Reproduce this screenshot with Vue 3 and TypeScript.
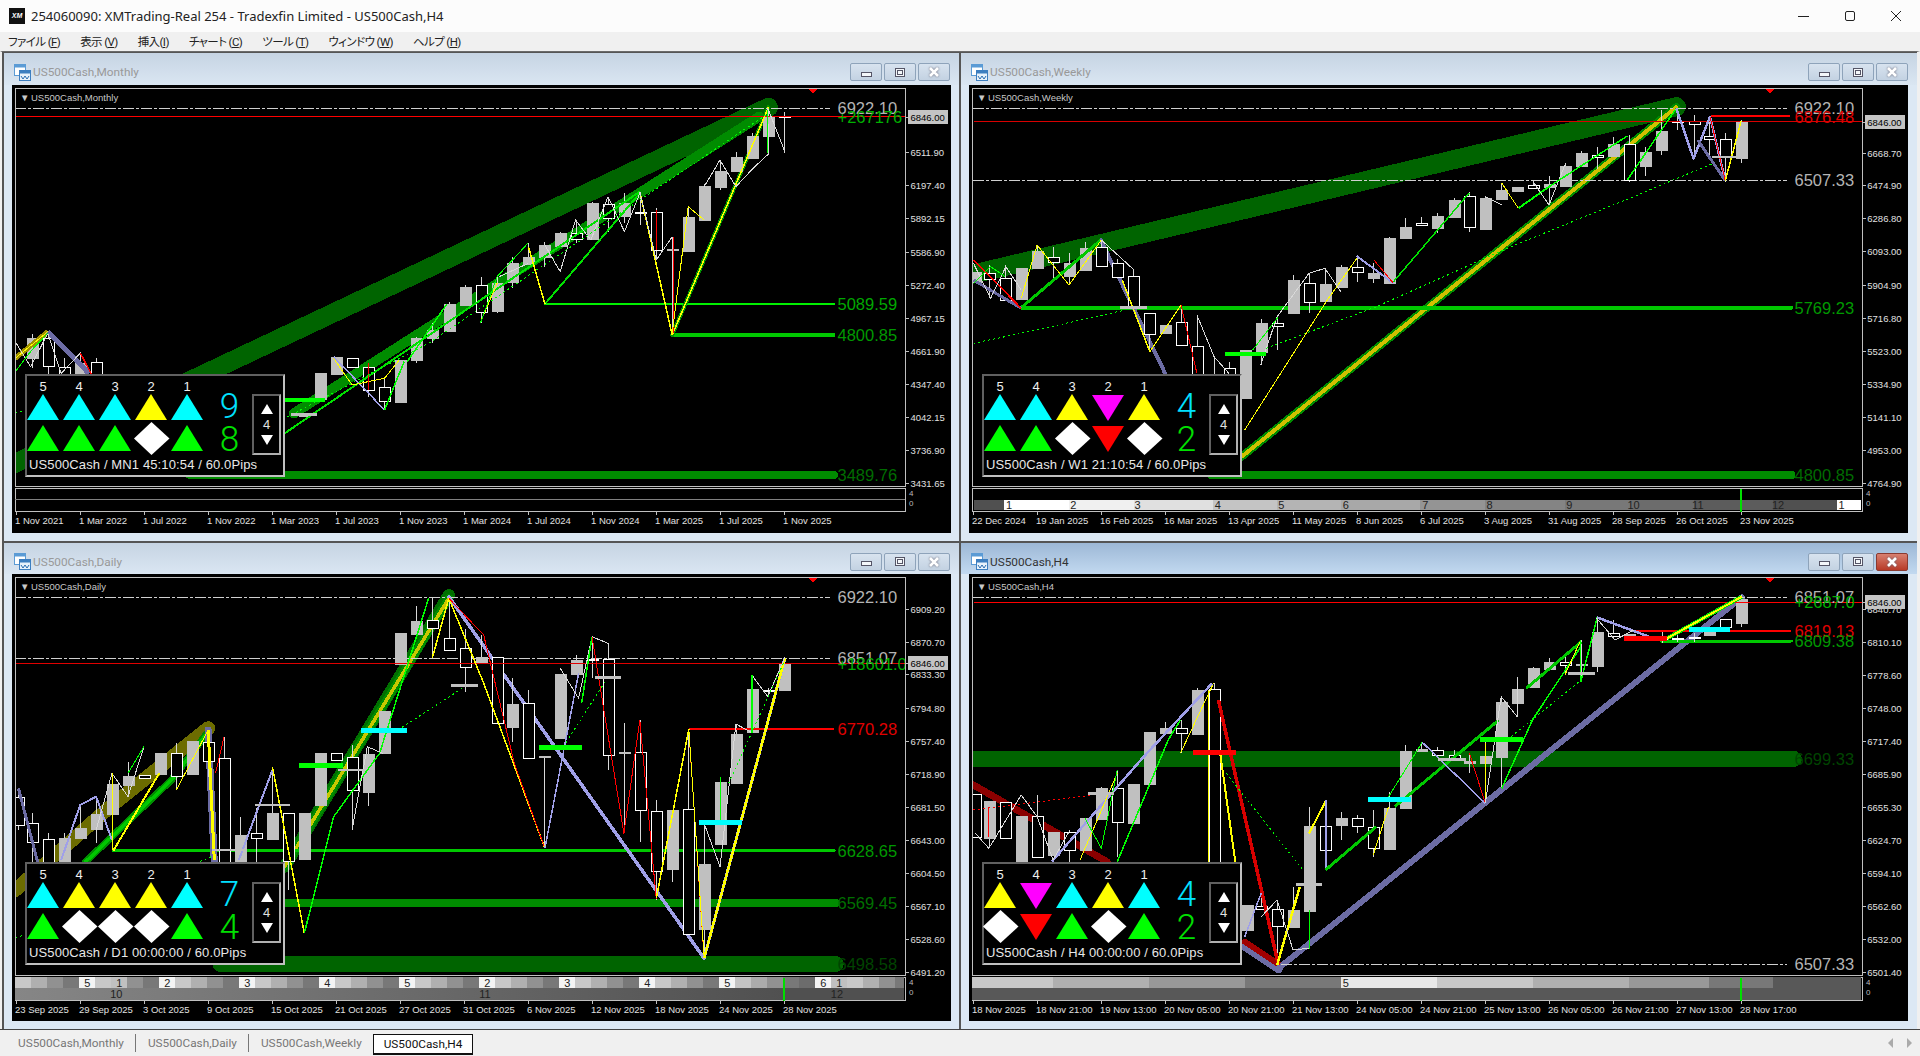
<template>
  <div class="app">
    <header class="titlebar">
      <span class="titlebar__logo">XM</span>
      <span class="titlebar__text">254060090: XMTrading-Real 254 - Tradexfin Limited - US500Cash,H4</span>
      <div class="titlebar__controls">
        <svg width="16" height="16" viewBox="0 0 16 16"><path d="M2 8.5h11" stroke="#222" fill="none" /></svg>
        <svg width="16" height="16" viewBox="0 0 16 16"><rect x="3.5" y="3.5" width="9" height="9" rx="1.5" stroke="#222" fill="none" /></svg>
        <svg width="16" height="16" viewBox="0 0 16 16"><path d="M3 3l10 10M13 3L3 13" stroke="#222" fill="none" /></svg>
      </div>
    </header>

    <nav class="menubar">
      <span v-for="m in menus" :key="m.label">{{ m.label }}{{ m.gap }}(<u>{{ m.key }}</u>)</span>
    </nav>

    <main class="mdi">
      <section
        v-for="(c, i) in charts"
        :key="c.title"
        class="child"
        :class="{ 'child--active': c.active, 'child--lower': i > 1 }"
      >
        <div class="child__title">
          <svg class="child__icon" width="17" height="17" viewBox="0 0 17 17">
            <rect x="0.5" y="0.5" width="11" height="11" fill="#fff" stroke="#5b9bd5" />
            <rect x="0.5" y="0.5" width="11" height="3" fill="#5b9bd5" />
            <rect x="5.5" y="6.5" width="11" height="10" fill="#e8f2fb" stroke="#3d7fc0" />
            <rect x="5.5" y="6.5" width="11" height="3" fill="#3d7fc0" />
            <path d="M7 12l2 3 2-3 2 3 2-3" stroke="#2a6db0" fill="none" />
          </svg>
          <span class="child__name">{{ c.title }}</span>
          <div class="child__buttons">
            <button class="win-btn"><i class="glyph glyph--min"></i></button>
            <button class="win-btn"><i class="glyph glyph--max"></i></button>
            <button class="win-btn win-btn--close">
              <svg width="14" height="12" viewBox="0 0 14 12"><path d="M3 2l8 8M11 2l-8 8" stroke-width="2.6" fill="none" /></svg>
            </button>
          </div>
        </div>

        <div class="chart">
          <svg class="plot" shape-rendering="crispEdges">
            <defs>
              <clipPath :id="`plot-${i}`"><rect x="3" y="3" width="890" height="398" /></clipPath>
              <linearGradient :id="`fade-${i}`" x1="0" x2="1" y1="0" y2="0">
                <stop offset="0" stop-color="#868686" />
                <stop offset="1" stop-color="#505050" />
              </linearGradient>
            </defs>

            <g :clip-path="`url(#plot-${i})`">
              <polyline
                v-for="(l, j) in c.back"
                :key="'b' + j"
                :points="l.points"
                :stroke="l.c"
                :stroke-width="l.w"
                :stroke-dasharray="l.d"
                fill="none"
                stroke-linecap="round"
                stroke-linejoin="round"
              />
              <g v-for="(k, j) in c.candles" :key="'c' + j">
                <line :x1="k.x" :x2="k.x" :y1="k.high" :y2="k.low" stroke="#d8d8d8" />
                <rect
                  :x="k.x - 5.5"
                  :y="k.top"
                  width="11"
                  :height="k.h"
                  :fill="k.hollow ? '#000' : '#c0c0c0'"
                  :stroke="k.hollow ? '#fff' : '#c0c0c0'"
                />
              </g>
              <polyline
                v-for="(l, j) in c.front"
                :key="'f' + j"
                :points="l.points"
                :stroke="l.c"
                :stroke-width="l.w"
                :stroke-dasharray="l.d"
                fill="none"
                stroke-linejoin="round"
              />
              <text
                v-for="b in c.bigLabels"
                :key="b.text"
                class="big"
                :x="825.5"
                :y="b.y"
                :fill="b.c"
              >{{ b.text }}</text>
              <polygon points="797,4 805,4 801,9" fill="#ff0000" />
            </g>

            <rect class="frame" x="3.5" y="3.5" width="890" height="398" />
            <text class="head" x="8" y="12">▼</text>
            <text class="head" x="19" y="12">{{ c.title }}</text>

            <rect class="frame" x="3.5" y="403.5" width="890" height="23" />
            <rect
              v-for="(r, j) in c.strip"
              :key="'s' + j"
              :x="r.x"
              :y="r.y"
              :width="r.w"
              :height="r.h"
              :fill="r.fill === 'fade' ? `url(#fade-${i})` : r.fill"
            />
            <text v-for="(r, j) in c.stripLabels" :key="'sl' + j" class="strip" :x="r.x" :y="r.y">{{ r.text }}</text>
            <line v-if="c.marker" :x1="c.marker" :x2="c.marker" y1="404" y2="427" stroke="#00e000" stroke-width="2" />
            <text class="tiny" x="897" y="411">4</text>
            <text class="tiny" x="897" y="421">0</text>

            <g v-for="t in c.prices" :key="t.text">
              <line x1="894" x2="897" :y1="t.y" :y2="t.y" stroke="#c0c0c0" />
              <text class="axis" :x="c.priceX" :y="t.y">{{ t.text }}</text>
            </g>
            <line x1="894" x2="897" :y1="c.tagY" :y2="c.tagY" stroke="#c0c0c0" />
            <rect x="896" :y="c.tagY - 7" width="40" height="14" fill="#c4c4c4" />
            <text class="axis axis--tag" :x="c.priceX" :y="c.tagY">6846.00</text>

            <g v-for="t in c.dates" :key="t.text">
              <line :x1="t.x" :x2="t.x" y1="427" y2="430" stroke="#c0c0c0" />
              <text class="axis" :x="t.x - 1" :y="c.dateY">{{ t.text }}</text>
            </g>
          </svg>

          <div class="panel">
            <div class="panel__grid">
              <span v-for="n in 5" :key="n" class="panel__num">{{ 6 - n }}</span>
              <template v-for="(row, r) in c.rows" :key="r">
                <svg v-for="(kind, j) in row" :key="j" class="panel__sym" viewBox="0 0 36 33">
                  <polygon :points="symbols[kind].points" :fill="symbols[kind].fill" />
                </svg>
              </template>
            </div>
            <div class="panel__counts">
              <span class="panel__count panel__count--up">{{ c.counts[0] }}</span>
              <span class="panel__count panel__count--down">{{ c.counts[1] }}</span>
            </div>
            <div class="stepper">
              <svg width="12" height="10" viewBox="0 0 12 10"><polygon points="6,0 12,10 0,10" fill="#fff" /></svg>
              <span>4</span>
              <svg width="12" height="10" viewBox="0 0 12 10"><polygon points="0,0 12,0 6,10" fill="#fff" /></svg>
            </div>
            <div class="panel__foot">{{ c.footer }}</div>
          </div>
        </div>
      </section>
    </main>

    <footer class="tabs">
      <span v-for="(t, i) in tabs" :key="t" class="tab" :class="{ 'tab--active': i === 3, 'tab--sep': i < 2 }">{{ t }}</span>
      <div class="tabs__arrows">
        <svg width="6" height="10" viewBox="0 0 6 10"><polygon points="5,0 5,10 0,5" fill="#aaa" /></svg>
        <svg width="6" height="10" viewBox="0 0 6 10"><polygon points="1,0 1,10 6,5" fill="#aaa" /></svg>
      </div>
    </footer>
  </div>
</template>

<script setup lang="ts">
interface Stroke { c: string; w: number; p: number[]; d?: string }
type Raw = [number, number, number, number, number, boolean]

const menus = [
  { label: "ファイル", gap: " ", key: "F" },
  { label: "表示", gap: " ", key: "V" },
  { label: "挿入", gap: "", key: "I" },
  { label: "チャート", gap: " ", key: "C" },
  { label: "ツール", gap: " ", key: "T" },
  { label: "ウィンドウ", gap: " ", key: "W" },
  { label: "ヘルプ", gap: " ", key: "H" },
]
const tabs = ["US500Cash,Monthly", "US500Cash,Daily", "US500Cash,Weekly", "US500Cash,H4"]

const symbols: Record<string, { points: string; fill: string }> = {
  c: { points: "16,3 32,29 0,29", fill: "#00ffff" },
  y: { points: "16,3 32,29 0,29", fill: "#ffff00" },
  g: { points: "16,3 32,29 0,29", fill: "#00ff00" },
  m: { points: "0,4 32,4 16,30", fill: "#ff00ff" },
  r: { points: "0,4 32,4 16,30", fill: "#ff0000" },
  d: { points: "16.5,0 34.5,16.5 16.5,33 -1,16.5", fill: "#ffffff" },
}

// chart data is read off the reference: x in 960/1568 units, y in thirds of a pixel
const SX = 1568 / 960
const LAV = "#a0a0e8"
const LAVD = "#6c6ca4"
const YEL = "#ffff00"
const GRN = "#00ff00"
const RED = "#ff0000"
const WHT = "#d8d8d8"
const DK = "#006400"
const MID = "#008c00"
const LT = "#00c800"
const GRAY = "#c0c0c0"
const LBL = "#b4b4b4"
const CY = "#00ffff"

const s = (c: string, w: number, ...p: number[]): Stroke => ({ c, w, p })
const dot = (c: string, ...p: number[]): Stroke => ({ c, w: 1, p, d: "2 3" })
const dash = (y: number, x1: number, x2: number): Stroke => ({ c: "#d0d0d0", w: 1, p: [x1, y, x2, y], d: "10 3 2 3" })
const f = (x: number, t: number, b: number, wt = t, wb = b): Raw => [x, t, b, wt, wb, false]
const h = (x: number, t: number, b: number, wt = t, wb = b): Raw => [x, t, b, wt, wb, true]

const axis = (list: string) =>
  list.split(" ").map((e) => {
    const [text, y] = e.split("@")
    return { text, y: Number(y) }
  })

const shades = ["#c8c8c8", "#b0b0b0", "#919191", "#787878"]

function dailyStrip() {
  const labelled: Record<number, string> = { 4: "5", 6: "1", 9: "2", 14: "3", 19: "4", 24: "5", 29: "2", 34: "3", 39: "4", 44: "5", 50: "6", 51: "1" }
  const cells: { x: number; y: number; w: number; h: number; fill: string }[] = []
  for (let i = 0; i < 56; i++) {
    let fill = i === 51 || i === 6 ? "#c0c0c0" : labelled[i] ? "#f4f4f4" : shades[i % 5]
    if (i > 44 && i < 50) fill = ["#c4c4c4", "#ababab", "#919191", "#787878", "#6c6c6c"][i - 45]
    if (i > 51) fill = shades[i - 52]
    const x = 25 + i * 26.13
    cells.push({ x, y: 1310, w: Math.min(26.13, 1476 - x), h: 35, fill })
  }
  cells.push({ x: 25, y: 1345, w: 1256, h: 35, fill: "fade" })
  cells.push({ x: 1281, y: 1345, w: 195, h: 35, fill: "#505050" })
  const labels = Object.entries(labelled).map(([i, text]) => ({ x: 25 + Number(i) * 26.13 + 13, y: 1328, text }))
  labels.push({ x: 190, y: 1363, text: "10" }, { x: 792, y: 1363, text: "11" }, { x: 1367, y: 1363, text: "12" })
  return { cells, labels }
}

function weeklyStrip() {
  const segs: [number, number, string][] = [
    [22, 72, "#505050"], [72, 178, "#ffffff"], [178, 284, "#f0f0f0"], [284, 413, "#e0e0e0"], [413, 518, "#c4c4c4"],
    [518, 622, "#b4b4b4"], [622, 752, "#a8a8a8"], [752, 858, "#949494"], [858, 988, "#848484"], [988, 1094, "#787878"],
    [1094, 1198, "#6c6c6c"], [1198, 1328, "#5c5c5c"], [1328, 1432, "#505050"], [1432, 1471, "#ffffff"],
  ]
  const cells = segs.map(([a, b, fill]) => ({ x: a, y: 1350, w: b - a, h: 30, fill }))
  const labels = [[80, "1"], [185, "2"], [290, "3"], [421, "4"], [525, "5"], [630, "6"], [760, "7"], [865, "8"], [995, "9"], [1100, "10"], [1205, "11"], [1336, "12"], [1440, "1"]]
    .map(([x, text]) => ({ x: x as number, y: 1365, text: text as string }))
  return { cells, labels }
}

function h4Strip() {
  const segs: [number, number, string][] = [
    [20, 152, "#c8c8c8"], [152, 308, "#b0b0b0"], [308, 465, "#989898"], [465, 622, "#787878"], [622, 779, "#e8e8e8"],
    [779, 936, "#c8c8c8"], [936, 1093, "#b0b0b0"], [1093, 1223, "#989898"], [1223, 1328, "#787878"], [1328, 1471, "#585858"],
  ]
  const cells = segs.map(([a, b, fill]) => ({ x: a, y: 1310, w: b - a, h: 35, fill }))
  cells.push({ x: 20, y: 1345, w: 1451, h: 35, fill: "#585858" })
  return { cells, labels: [{ x: 630, y: 1328, text: "5" }] }
}

const raw = [
  {
    title: "US500Cash,Monthly", active: false, ox: 12, oy: 35, counts: ["9", "8"], rows: ["cccyc", "gggdg"],
    footer: "US500Cash / MN1 45:10:54 / 60.0Pips", tag: 200, dateY: 1412, marker: 0, priceX: 1487,
    strip: { cells: [{ x: 25, y: 1347, w: 1453, h: 2, fill: "#808080" }], labels: [] as { x: number; y: number; text: string }[] },
    prices: axis("6511.90@307 6197.40@406 5892.15@505 5586.90@605 5272.40@704 4967.15@803 4661.90@902 4347.40@1001 4042.15@1100 3736.90@1199 3431.65@1298"),
    dates: "1 Nov 2021,1 Mar 2022,1 Jul 2022,1 Nov 2022,1 Mar 2023,1 Jul 2023,1 Nov 2023,1 Mar 2024,1 Jul 2024,1 Nov 2024,1 Mar 2025,1 Jul 2025,1 Nov 2025",
    dateStart: 26,
    big: [["6922.10", 175, LBL], ["+267176", 200, "#00b000"], ["5089.59", 763, "#00a800"], ["4800.85", 856, "#009800"], ["3489.76", 1276, "#006c00"]],
    back: [
      s(DK, 19, 25, 1240, 1255, 172),
      s(MID, 10, 480, 1090, 1240, 200),
      s(MID, 8, 310, 1275, 1362, 1275),
      s(LT, 3.5, 1098, 855, 1362, 855),
      s("#00f000", 2, 890, 762, 1362, 762),
      s("#009000", 4, 1098, 855, 1255, 172),
      dash(175, 25, 1355),
    ],
    candles: [
      f(52, 865, 925, 853, 955), h(78, 865, 950, 845, 990), h(105, 952, 990, 925), f(131, 940, 990, 905), h(157, 937, 990, 925),
      f(497, 1091, 1096), f(523, 968, 1045), f(549, 920, 972), h(575, 923, 950), h(601, 950, 1018, 940, 1040), h(627, 1012, 1055, 985, 1080),
      f(653, 930, 1055), f(679, 865, 932, 860, 940), f(706, 840, 863, 820, 880), f(733, 762, 842, 755), f(759, 712, 765, 705),
      h(785, 705, 785, 680, 818), f(811, 700, 785, 680, 790), f(837, 640, 697, 620, 715), f(863, 620, 640, 580), f(889, 585, 620, 575, 650),
      f(915, 550, 588, 545), h(941, 550, 567, 510, 580), f(967, 460, 567, 455, 570), h(993, 462, 505, 440, 545), f(1019, 460, 500, 430, 520),
      h(1045, 486, 488, 425, 525), h(1071, 485, 598, 475, 630), f(1098, 597, 600, 560, 855), f(1124, 502, 603, 470), f(1150, 408, 510, 403),
      f(1176, 363, 410, 330, 420), f(1202, 322, 365, 305), f(1228, 257, 323, 250), f(1254, 197, 257, 175, 310), h(1281, 199, 201, 185, 310),
    ],
    front: [
      s(RED, 1, 25, 200, 1478, 200),
      s("#a09000", 5, 25, 925, 78, 845),
      s(YEL, 1, 25, 925, 78, 845),
      s(LAVD, 5, 78, 845, 145, 970),
      s(RED, 1.5, 131, 908, 150, 975),
      s(WHT, 1, 25, 875, 50, 950, 78, 850, 100, 970, 131, 910),
      s(GRN, 1, 25, 965, 52, 900, 78, 850),
      s("#00e000", 2, 465, 1150, 1045, 425),
      s("#00e000", 2, 890, 762, 1045, 430),
      s(LAV, 1.5, 1045, 425, 1098, 855),
      s(YEL, 1.5, 1045, 425, 1098, 855),
      s(YEL, 1.5, 1098, 855, 1255, 172),
      s(LAV, 1.5, 545, 920, 628, 1080),
      s(YEL, 1, 545, 925, 575, 1005, 628, 985, 652, 930),
      s(GRN, 1.5, 628, 1080, 660, 935),
      s(GRN, 1.5, 665, 935, 730, 762),
      s(RED, 1, 601, 940, 601, 1020),
      s(YEL, 1, 785, 815, 812, 700),
      s(GRN, 1, 785, 818, 812, 680, 863, 578),
      s(YEL, 1.5, 863, 590, 890, 762),
      s(WHT, 1, 863, 640, 815, 680),
      s(WHT, 1, 890, 585, 915, 665, 940, 510, 965, 570, 993, 440, 1020, 545, 1045, 430),
      s(WHT, 1, 1045, 425, 1072, 630, 1098, 560),
      s(RED, 1, 1072, 480, 1072, 600),
      s(RED, 1, 1100, 560, 1100, 850),
      s(YEL, 1, 1098, 850, 1124, 470, 1150, 510),
      s(WHT, 1, 1150, 410, 1176, 330, 1202, 410, 1230, 355, 1255, 312, 1254, 175, 1282, 305),
      s(GRN, 1, 1254, 180, 1254, 310),
      dot(GRN, 25, 1090, 100, 1045),
      dot(GRN, 340, 1140, 465, 1105, 700, 880, 1045, 450, 1255, 190),
      s(GRN, 4, 465, 1050, 530, 1050),
      s(GRAY, 2.5, 475, 1093, 518, 1093),
    ],
  },
  {
    title: "US500Cash,Weekly", active: false, ox: 9, oy: 35, counts: ["4", "2"], rows: ["ccymy", "ggdrd"],
    footer: "US500Cash / W1 21:10:54 / 60.0Pips", tag: 215, dateY: 1412, marker: 1276, priceX: 1482,
    strip: weeklyStrip(),
    prices: axis("6668.70@308 6474.90@406 6286.80@505 6093.00@604 5904.90@704 5716.80@803 5523.00@902 5334.90@1001 5141.10@1100 4953.00@1199 4764.90@1298"),
    dates: "22 Dec 2024,19 Jan 2025,16 Feb 2025,16 Mar 2025,13 Apr 2025,11 May 2025,8 Jun 2025,6 Jul 2025,3 Aug 2025,31 Aug 2025,28 Sep 2025,26 Oct 2025,23 Nov 2025",
    dateStart: 21,
    big: [["6922.10", 175, LBL], ["6876.48", 200, "#e00000"], ["6507.33", 391, LBL], ["5769.23", 775, "#009800"], ["4800.85", 1276, "#006c00"]],
    back: [
      s(DK, 19, 22, 672, 1170, 170),
      s(MID, 8, 460, 1220, 1170, 172),
      s("#d0c000", 4, 460, 1220, 1170, 172),
      s(MID, 8, 410, 1275, 1358, 1275),
      s(LT, 4, 100, 773, 1358, 773),
      dash(175, 22, 1350),
      dash(391, 22, 1350),
      s(LAVD, 4, 230, 570, 335, 970),
    ],
    candles: [
      f(25, 665, 695), h(47, 668, 685, 645, 745), h(74, 683, 748, 645), f(100, 655, 748), f(126, 603, 655, 585), h(152, 620, 635, 590, 690),
      f(178, 640, 680, 610, 705), f(204, 595, 660, 575), h(231, 592, 648, 570), h(257, 640, 683, 628), h(283, 677, 773, 658), h(309, 788, 850, 788, 905),
      f(335, 825, 850), h(361, 815, 885, 770), h(387, 888, 990, 795), f(415, 985, 990, 920), h(439, 955, 990, 935), f(465, 900, 1045), f(491, 818, 905, 808, 945),
      h(518, 820, 830, 800, 900), f(544, 690, 788, 675), h(570, 700, 758, 670, 790), f(596, 703, 755, 655), f(622, 652, 712, 645), h(648, 652, 668, 615, 695),
      f(674, 668, 683, 640, 700), f(701, 565, 700, 560), f(727, 532, 566, 505), h(753, 518, 525, 500), f(779, 498, 535, 490, 550), f(806, 450, 500, 445),
      h(832, 438, 532, 425, 545), f(858, 445, 537, 440), f(884, 420, 447, 400), f(910, 412, 423), h(936, 405, 415, 393), f(962, 403, 413, 378, 465),
      f(988, 348, 408, 340), f(1014, 310, 350, 303), h(1041, 315, 320, 292, 358), f(1067, 283, 320, 260), h(1093, 282, 390, 255, 395), f(1119, 305, 347, 290, 378),
      f(1145, 243, 300, 180, 315), h(1171, 213, 215, 175, 240), h(1198, 213, 222, 195, 325), h(1224, 258, 268, 200, 320), h(1250, 268, 320, 250, 395), f(1276, 212, 323, 210, 340),
    ],
    front: [
      s("#d80000", 1, 22, 215, 1473, 215),
      s(RED, 2.5, 1226, 198, 1355, 198),
      s(LT, 3, 100, 773, 230, 570),
      s(LAVD, 3, 22, 690, 100, 775),
      s(RED, 1.5, 22, 630, 100, 775),
      s(YEL, 1.5, 265, 690, 310, 905),
      s(WHT, 1, 22, 640, 50, 745, 75, 650, 100, 720),
      s(YEL, 1, 100, 745, 126, 585, 178, 705, 231, 570),
      s(GRN, 1, 22, 700, 50, 650, 74, 680),
      s(WHT, 1, 231, 570, 283, 658),
      s(YEL, 1, 310, 905, 361, 765),
      s(RED, 1, 361, 765, 387, 970),
      s(WHT, 1, 387, 795, 415, 920, 439, 970),
      s(YEL, 1, 465, 1140, 600, 750, 650, 620),
      s(LAV, 2, 648, 618, 708, 700),
      s(RED, 1, 676, 630, 708, 700),
      s("#00e000", 1.5, 708, 695, 780, 540, 832, 428),
      s(WHT, 1, 491, 945, 518, 800, 570, 670, 596, 655, 622, 725),
      s(GRN, 1, 478, 900, 520, 800),
      s(YEL, 1, 885, 400, 912, 475),
      s(GRN, 2, 912, 475, 962, 410),
      s(WHT, 1, 858, 440, 885, 465),
      s(WHT, 1, 936, 395, 962, 465, 988, 345),
      s(GRN, 1.5, 962, 410, 1090, 258),
      s(GRN, 1.5, 1090, 390, 1170, 175),
      s(LAV, 2.5, 1170, 175, 1198, 325, 1225, 200, 1250, 392),
      s(LAVD, 3, 1205, 270, 1250, 392),
      s(RED, 1, 1225, 200, 1250, 392),
      s(YEL, 1.5, 1250, 392, 1276, 212),
      dot(GRN, 22, 880, 100, 850, 270, 780),
      dot(GRN, 500, 895, 680, 770, 900, 590, 1100, 440, 1230, 340),
      s(GRN, 4.5, 432, 912, 500, 912),
      s(GRAY, 2.5, 262, 772, 305, 772),
      s(GRAY, 2.5, 1228, 321, 1272, 321),
    ],
  },
  {
    title: "US500Cash,Daily", active: false, ox: 12, oy: 34, counts: ["7", "4"], rows: ["cyyyc", "gdddg"],
    footer: "US500Cash / D1 00:00:00 / 60.0Pips", tag: 370, dateY: 1409, marker: 1281, priceX: 1487,
    strip: dailyStrip(),
    prices: axis("6909.20@206 6870.70@305 6833.30@403 6794.80@503 6757.40@602 6718.90@701 6681.50@800 6643.00@899 6604.50@998 6567.10@1097 6528.60@1196 6491.20@1295"),
    dates: "23 Sep 2025,29 Sep 2025,3 Oct 2025,9 Oct 2025,15 Oct 2025,21 Oct 2025,27 Oct 2025,31 Oct 2025,6 Nov 2025,12 Nov 2025,18 Nov 2025,24 Nov 2025,28 Nov 2025",
    dateStart: 26,
    big: [["6922.10", 172, LBL], ["6851.07", 355, LBL], ["+18601.0", 372, "#00b000"], ["6770.28", 568, "#e00000"], ["6628.65", 934, "#009800"], ["6569.45", 1090, "#007000"], ["6498.58", 1273, "#004400"]],
    back: [
      s("#6c6c00", 14, 25, 1050, 180, 800, 340, 565),
      s(DK, 16, 360, 1272, 1365, 1272),
      s(MID, 8, 465, 1089, 1365, 1089),
      s("#007000", 12, 465, 980, 733, 165),
      s(MID, 8, 465, 980, 733, 175),
      s("#c8c800", 3.5, 465, 980, 733, 175),
      s(MID, 7, 140, 965, 280, 720, 340, 575),
      s(LT, 3.5, 140, 965, 280, 720, 340, 575),
      s(LT, 3.5, 185, 932, 1362, 932),
      dash(172, 25, 1355),
      dash(355, 25, 1355),
      s(LAVD, 7, 340, 570, 350, 965),
      s(LAV, 3.5, 733, 170, 1150, 1255),
    ],
    candles: [
      h(30, 770, 855, 745, 870), h(52, 848, 905, 820, 990), h(78, 898, 990, 880), f(105, 895, 990, 880), f(131, 865, 895, 795), f(157, 822, 868, 770, 910),
      f(183, 733, 822, 700, 905), f(209, 708, 735, 665, 770), h(235, 706, 716), f(261, 640, 702), h(288, 638, 706, 610, 750), f(314, 603, 702),
      h(340, 605, 662, 570, 710), h(366, 655, 990, 590), f(392, 885, 990, 830), h(418, 880, 895, 805, 990), f(444, 820, 897, 685), h(470, 818, 962, 818, 1050),
      f(497, 820, 957), f(523, 640, 795), h(549, 640, 660), h(575, 650, 750, 615, 870), f(601, 642, 755, 620, 797), f(627, 514, 640), f(653, 280, 372),
      f(679, 244, 282, 198), h(706, 240, 265, 175, 355), h(733, 295, 330, 170), h(759, 325, 383, 268, 455), f(785, 350, 365, 285), h(811, 350, 548),
      f(837, 492, 560, 415, 605), h(863, 488, 653, 450), f(889, 648, 652, 648, 925), f(915, 403, 595), f(941, 360, 402, 345), h(967, 357, 359, 290, 415),
      h(993, 358, 647, 310, 690), f(1019, 637, 640, 550, 880), h(1045, 637, 812, 540, 905), h(1071, 812, 992, 780, 1080), f(1097, 810, 987, 810, 1025),
      h(1124, 808, 1183, 568), f(1150, 973, 1167, 850, 1255), f(1176, 727, 912, 712), f(1202, 582, 728, 552), f(1228, 448, 578, 405), h(1254, 450, 454, 445, 470), f(1280, 370, 450, 352),
    ],
    front: [
      s("#e00000", 1, 25, 370, 1478, 370),
      s(RED, 2, 1125, 567, 1362, 567),
      s(LAVD, 3, 30, 745, 62, 970),
      s(LAV, 2, 100, 960, 131, 795, 157, 770, 183, 900),
      s(WHT, 1, 157, 870, 183, 700, 209, 770, 235, 620),
      s(GRN, 1, 209, 700, 235, 620),
      s(YEL, 1, 183, 700, 183, 930),
      s(YEL, 2, 185, 932, 260, 700),
      s(YEL, 1, 288, 750, 340, 570),
      s(YEL, 3, 340, 570, 350, 960),
      s(RED, 1, 366, 590, 352, 700),
      s(LAV, 2, 390, 960, 445, 690),
      s(YEL, 1.5, 445, 680, 497, 1180),
      s(GRN, 1.5, 497, 1180, 545, 830, 620, 640, 700, 175),
      s(WHT, 1, 575, 870, 600, 620, 625, 640),
      s(YEL, 1.5, 706, 355, 733, 175),
      s(YEL, 1.5, 733, 175, 790, 430, 890, 925),
      s(RED, 1, 733, 175, 790, 285, 840, 670, 890, 925),
      s(LAV, 1.5, 890, 925, 945, 400),
      s(WHT, 1, 915, 385, 945, 475, 967, 290, 993, 310),
      s(GRN, 1.5, 950, 490, 967, 290),
      s(RED, 1, 967, 290, 1019, 880, 1045, 540, 1072, 1078),
      s(YEL, 1.5, 1072, 1075, 1125, 568),
      s(RED, 1, 1125, 568, 1150, 1255),
      s(YEL, 1, 1125, 568, 1150, 1250),
      s(LAV, 3, 1150, 1255, 1282, 355),
      s(YEL, 2.5, 1150, 1255, 1282, 355),
      s(WHT, 1, 1150, 850, 1176, 980, 1202, 552, 1228, 578, 1228, 405, 1254, 470, 1282, 352),
      s(GRN, 1, 1176, 840, 1176, 712),
      s(GRN, 1.5, 1228, 578, 1228, 405),
      dot(GRN, 25, 1195, 345, 950),
      dot(GRN, 650, 570, 755, 445),
      dot(GRN, 920, 620, 990, 420),
      dot(GRN, 1190, 730, 1282, 360),
      s(CY, 5, 590, 572, 665, 572),
      s(CY, 5, 1142, 847, 1212, 847),
      s(GRN, 5, 488, 676, 560, 676),
      s(GRN, 5, 880, 622, 950, 622),
      s(GRAY, 2.5, 417, 795, 473, 795),
      s(GRAY, 2.5, 737, 436, 781, 436),
      s(GRAY, 2.5, 972, 412, 1015, 412),
      s(GRAY, 2.5, 346, 930, 400, 930),
      s(GRAY, 2.5, 552, 690, 595, 690),
    ],
  },
  {
    title: "US500Cash,H4", active: true, ox: 9, oy: 34, counts: ["4", "2"], rows: ["ymcyc", "drgdg"],
    footer: "US500Cash / H4 00:00:00 / 60.0Pips", tag: 187, dateY: 1409, marker: 1276, priceX: 1482,
    strip: h4Strip(),
    prices: axis("6840.70@207 6810.10@305 6778.60@404 6748.00@503 6717.40@602 6685.90@701 6655.30@800 6624.70@899 6594.10@998 6562.60@1097 6532.00@1196 6501.40@1295"),
    dates: "18 Nov 2025,18 Nov 21:00,19 Nov 13:00,20 Nov 05:00,20 Nov 21:00,21 Nov 13:00,24 Nov 05:00,24 Nov 21:00,25 Nov 13:00,26 Nov 05:00,26 Nov 21:00,27 Nov 13:00,28 Nov 17:00",
    dateStart: 21,
    big: [["6851.07", 172, LBL], ["+2687.0", 187, "#00b000"], ["6819.13", 272, "#e00000"], ["6809.38", 304, "#009800"], ["6699.33", 658, "#004400"], ["6507.33", 1273, LBL]],
    back: [
      s(DK, 16, 22, 657, 1362, 657),
      s("#8b0000", 7, 22, 735, 240, 965),
      s(LAVD, 8, 465, 1220, 520, 1288),
      s("#a00000", 6, 465, 1205, 520, 1272),
      s(LAVD, 6, 520, 1285, 1277, 172),
      s(LT, 3, 1145, 303, 1358, 303),
      dash(172, 22, 1350),
      dash(1273, 525, 1350),
    ],
    candles: [
      h(25, 762, 890), f(47, 783, 893, 783, 925), h(74, 787, 895), f(100, 828, 990), h(126, 828, 952, 765), f(152, 877, 945),
      h(178, 875, 930, 870, 970), f(204, 835, 930), f(231, 745, 837, 740), h(257, 745, 848, 690, 950), f(283, 732, 848), f(309, 576, 732), f(335, 565, 580, 545),
      h(361, 565, 580, 540, 640), f(387, 450, 581, 445), h(414, 448, 990, 430), f(468, 1095, 1170), h(492, 1098, 1107, 1060), h(518, 1108, 1158, 1080, 1270),
      f(544, 1110, 1160, 1040), f(570, 858, 1112, 800), h(596, 858, 930, 780, 990), f(622, 835, 855, 815, 900), h(648, 835, 860, 825, 880), h(674, 862, 925, 810, 950),
      f(701, 803, 927, 755), f(727, 632, 803, 615), f(753, 628, 635, 605), h(779, 630, 645, 620), h(806, 645, 660, 630), f(832, 662, 667, 640, 700), f(858, 648, 668, 605),
      f(884, 487, 653, 470, 745), f(910, 447, 488, 410, 530), f(936, 385, 443, 380), f(962, 366, 388, 355), h(988, 366, 375, 345, 405), f(1014, 373, 377, 300, 425),
      f(1041, 276, 378, 232, 395), h(1067, 278, 288, 240), f(1093, 283, 288), h(1146, 293, 296, 275, 310), h(1171, 294, 297, 285, 305), h(1198, 292, 296, 280, 305),
      f(1224, 275, 283), h(1250, 238, 262), f(1276, 178, 250, 165, 260),
    ],
    front: [
      s(RED, 1.5, 22, 187, 1473, 187),
      s(RED, 2, 1095, 272, 1358, 272),
      s("#d80000", 3.5, 422, 480, 520, 1275),
      s(RED, 1, 47, 890, 47, 800),
      s(YEL, 2, 425, 640, 450, 970),
      s(YEL, 1, 405, 450, 405, 970),
      s(YEL, 1, 414, 430, 360, 640),
      s(LAV, 2.5, 150, 965, 300, 650, 412, 430),
      s(WHT, 1, 25, 880, 47, 925, 100, 765, 126, 830, 152, 960, 178, 875),
      s(YEL, 1, 196, 960, 257, 700),
      s(GRN, 1, 204, 835, 231, 925, 257, 690),
      s(GRN, 1.5, 257, 965, 340, 600, 360, 540),
      s(YEL, 2.5, 518, 1275, 555, 1040),
      s(LAV, 1.5, 465, 1190, 492, 1060),
      s(WHT, 1, 492, 1130, 518, 1080, 544, 1230, 570, 1225),
      s(GRN, 1, 570, 1228, 570, 1110),
      s(YEL, 2, 597, 785, 570, 880),
      s(LAV, 2, 597, 990, 597, 780),
      s(LT, 3, 597, 990, 680, 860),
      s(LT, 3, 710, 800, 880, 540),
      s(LT, 3, 925, 445, 1015, 305),
      s(YEL, 1, 675, 945, 700, 800),
      s(GRN, 1, 700, 770, 755, 607),
      s(LAV, 1.5, 755, 607, 858, 790),
      s(RED, 1, 832, 640, 858, 790),
      s(YEL, 1, 858, 610, 858, 790),
      s(GRN, 1.5, 885, 745, 935, 540, 1014, 320),
      s(WHT, 1, 858, 790, 884, 470, 910, 530, 910, 410),
      s(YEL, 1, 988, 405, 1014, 300),
      s(GRN, 1, 1014, 425, 1014, 300),
      s(GRN, 1.5, 1014, 425, 1041, 232),
      s(LAV, 2.5, 1040, 232, 1140, 300),
      s(WHT, 1, 1040, 235, 1070, 300, 1100, 270),
      s("#00e000", 4, 1155, 295, 1277, 170),
      s(YEL, 2, 1155, 295, 1277, 170),
      dot(RED, 22, 810, 230, 762),
      dot(GRN, 435, 700, 560, 990),
      dot(GRN, 900, 590, 1015, 420),
      s(RED, 4.5, 380, 637, 450, 637),
      s(RED, 4.5, 1085, 295, 1155, 295),
      s(CY, 4.5, 666, 778, 737, 778),
      s(CY, 4.5, 1190, 268, 1258, 268),
      s(GRN, 4.5, 849, 598, 920, 598),
      s(GRAY, 2.5, 209, 760, 252, 760),
      s(GRAY, 2.5, 780, 658, 826, 658),
      s(GRAY, 2.5, 993, 400, 1037, 400),
      s(GRAY, 2.5, 549, 1033, 592, 1033),
    ],
  },
]

const charts = raw.map((r) => {
  const X = (v: number) => Math.round((v / SX - r.ox) * 10) / 10
  const Y = (v: number) => Math.round((v / 3 - r.oy) * 10) / 10
  const toLine = (l: Stroke) => {
    const pts: string[] = []
    for (let i = 0; i < l.p.length; i += 2) pts.push(`${X(l.p[i])},${Y(l.p[i + 1])}`)
    return { c: l.c, w: l.w, d: l.d, points: pts.join(" ") }
  }
  return {
    title: r.title,
    active: r.active,
    counts: r.counts,
    rows: r.rows.map((row) => row.split("")),
    footer: r.footer,
    tagY: Math.round(Y(r.tag)),
    dateY: Y(r.dateY),
    priceX: X(r.priceX),
    marker: r.marker ? X(r.marker) : 0,
    back: r.back.map(toLine),
    front: r.front.map(toLine),
    candles: (r.candles as Raw[]).map(([x, t, b, wt, wb, hollow]) => ({
      x: Math.round(X(x)) + 0.5,
      top: Math.round(Y(t)) + 0.5,
      h: Math.max(1, Math.round((b - t) / 3)),
      high: Y(wt),
      low: Y(wb),
      hollow,
    })),
    bigLabels: r.big.map(([text, y, c]) => ({ text: text as string, y: Y(y as number), c: c as string })),
    prices: r.prices.map((t) => ({ text: t.text, y: Math.round(Y(t.y)) })),
    dates: r.dates.split(",").map((text, i) => ({ text, x: Math.round(X(r.dateStart + i * 104.53)) })),
    strip: r.strip.cells.map((c) => ({ x: X(c.x), y: Y(c.y), w: c.w / SX + 0.5, h: c.h / 3, fill: c.fill })),
    stripLabels: r.strip.labels.map((l) => ({ x: X(l.x), y: Y(l.y), text: l.text })),
  }
})
</script>

<style scoped>
.app {
  display: flex;
  flex-direction: column;
  width: 1920px;
  height: 1056px;
  overflow: hidden;
  background: #f0f0f0;
  font-family: "Noto Sans", "Noto Sans CJK JP", sans-serif;
}

.titlebar {
  display: flex;
  align-items: center;
  flex: 0 0 32px;
  padding-left: 9px;
  background: #fcfcfc;
  color: #222;
  font-size: 13px;
}

.titlebar__logo {
  width: 16px;
  height: 16px;
  margin-right: 6px;
  background: #111;
  color: #fff;
  font: italic 700 7px/16px "Liberation Sans", sans-serif;
  text-align: center;
}

.titlebar__controls {
  display: flex;
  gap: 30px;
  margin-left: auto;
  margin-right: 16px;
}

.menubar {
  display: flex;
  align-items: center;
  gap: 20px;
  flex: 0 0 19px;
  box-sizing: border-box;
  padding: 0 0 1px 8px;
  background: #f0f0f0;
  color: #222;
  font-family: Roboto, "Noto Sans CJK JP", sans-serif;
  font-size: 11.5px;
  font-feature-settings: "palt";
  letter-spacing: -0.6px;
}

.mdi {
  display: grid;
  grid-template-columns: 955px 956px;
  grid-template-rows: 488px 486px;
  gap: 2px;
  flex: 1;
  padding: 1px 0 0 2px;
  border-top: 1px solid #6a6a6a;
  border-left: 2px solid #f0f0f0;
  border-right: 3px solid #f0f0f0;
  background: #555;
}

.child {
  display: flex;
  flex-direction: column;
  padding: 0 0 8px 8px;
  background: #dce8f4;
}

.child__title {
  display: flex;
  align-items: center;
  flex: 0 0 32px;
  box-sizing: border-box;
  margin-left: -8px;
  padding: 6px 0 0 10px;
  background: linear-gradient(#c6d4e3, #dae6f2);
}

.child--lower .child__title {
  flex-basis: 31px;
}

.child--active .child__title {
  background: linear-gradient(#9db8d6, #c2d9f0);
}

.child__icon {
  margin-right: 2px;
}

.child__name {
  color: #999;
  font-family: Roboto, sans-serif;
  font-size: 11.8px;
}

.child--active .child__name {
  color: #333;
}

.child__buttons {
  display: flex;
  gap: 2px;
  margin-left: auto;
  margin-right: 9px;
}

.win-btn {
  display: flex;
  align-items: center;
  justify-content: center;
  width: 32px;
  height: 18px;
  padding: 0;
  border: 1px solid #8ea3ba;
  border-radius: 2px;
  background: linear-gradient(#d8e3ef, #c3d2e2);
}

.win-btn svg {
  stroke: #fff;
  filter: drop-shadow(0 0 1px #667);
}

.child--active .win-btn--close {
  border-color: #8a3a30;
  background: linear-gradient(#d88070, #b83a28);
}

.glyph {
  display: block;
  border: 1px solid #556;
  background: #f4f7fa;
}

.glyph--min {
  width: 9px;
  height: 3px;
  margin-top: 4px;
}

.glyph--max {
  width: 8px;
  height: 7px;
  box-shadow: inset 0 0 0 1px #f4f7fa, inset 0 0 0 2px #556;
  background: #f4f7fa;
}

.chart {
  position: relative;
  flex: 1;
  width: 939px;
  background: #000;
}

.plot {
  display: block;
  width: 100%;
  height: 100%;
  font-family: "Liberation Sans", sans-serif;
}

.frame {
  fill: none;
  stroke: #c0c0c0;
}

.big {
  font-size: 16.5px;
  dominant-baseline: central;
}

.head {
  fill: #c8c8c8;
  font-size: 9.5px;
  dominant-baseline: central;
}

.axis {
  fill: #e0e0e0;
  font-size: 9.5px;
  dominant-baseline: central;
}

.axis--tag {
  fill: #000;
}

.strip {
  fill: #222;
  font-size: 11px;
  text-anchor: middle;
  dominant-baseline: central;
}

.tiny {
  fill: #bbb;
  font-size: 8px;
}

.panel {
  position: absolute;
  top: 289px;
  left: 13px;
  display: grid;
  grid-template-columns: 180px 45px 29px;
  grid-template-rows: 80px 18px;
  box-sizing: border-box;
  width: 260px;
  height: 103px;
  border: 2px solid;
  border-color: #606060 #c0c0c0 #c0c0c0 #606060;
  background: #000;
  font-family: "Liberation Sans", sans-serif;
}

.child--lower .panel {
  top: 288px;
}

.panel__grid {
  display: grid;
  grid-template-columns: repeat(5, 36px);
  grid-template-rows: 15px 31px 31px;
}

.panel__num {
  width: 32px;
  color: #f0f0f0;
  font-size: 13px;
  line-height: 22px;
  text-align: center;
}

.panel__sym {
  display: block;
  width: 36px;
  height: 33px;
  overflow: visible;
}

.panel__counts {
  display: flex;
  flex-direction: column;
  padding-top: 14px;
}

.panel__count {
  height: 33px;
  font-family: Roboto, sans-serif;
  font-size: 35px;
  font-weight: 300;
  line-height: 33px;
  text-align: center;
}

.panel__count--up {
  color: #00e0ff;
}

.panel__count--down {
  color: #00e000;
}

.stepper {
  display: flex;
  flex-direction: column;
  align-items: center;
  justify-content: space-between;
  box-sizing: border-box;
  height: 61px;
  margin-top: 18px;
  padding: 8px 0;
  border: 2px solid;
  border-color: #606060 #b0b0b0 #b0b0b0 #606060;
  color: #e0e0e0;
  font-size: 13px;
  line-height: 12px;
}

.panel__foot {
  grid-column: 1 / -1;
  padding-left: 2px;
  color: #e8e8e8;
  font-size: 13px;
  letter-spacing: 0.12px;
  line-height: 17px;
  white-space: nowrap;
}

.tabs {
  display: flex;
  align-items: flex-start;
  flex: 0 0 26px;
  padding: 4px 0 0 6px;
  border-top: 1px solid #444;
  background: #f0f0f0;
}

.tab {
  padding: 0 11px 0 12px;
  color: #777;
  font-family: Roboto, sans-serif;
  font-size: 11.8px;
  line-height: 18px;
}

.tab--sep {
  border-right: 1px solid #777;
}

.tab--active {
  padding: 0 10px;
  border: 1px solid #111;
  border-bottom-width: 2px;
  background: #fff;
  color: #111;
}

.tabs__arrows {
  display: flex;
  gap: 12px;
  margin: 4px 8px 0 auto;
}
</style>

<style>
html,
body {
  margin: 0;
  overflow: hidden;
}
</style>
